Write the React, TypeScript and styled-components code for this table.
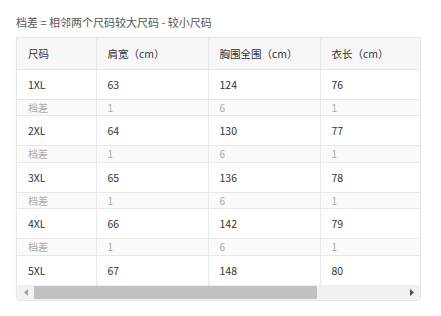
import React from 'react';
import styled, { createGlobalStyle } from 'styled-components';

const GlobalStyle = createGlobalStyle`
  html, body {
    margin: 0;
    padding: 0;
    background: #ffffff;
    font-family: "Noto Sans CJK SC", "Noto Sans", sans-serif;
  }
`;

interface SizeRow {
  size: string;
  shoulder: number;
  chest: number;
  length: number;
}

const rows: SizeRow[] = [
  { size: '1XL', shoulder: 63, chest: 124, length: 76 },
  { size: '2XL', shoulder: 64, chest: 130, length: 77 },
  { size: '3XL', shoulder: 65, chest: 136, length: 78 },
  { size: '4XL', shoulder: 66, chest: 142, length: 79 },
  { size: '5XL', shoulder: 67, chest: 148, length: 80 },
];

const Page = styled.div`
  padding: 14px 20px 0 16px;
  width: 405px;
`;

const Caption = styled.div`
  font-size: 11px;
  line-height: 16px;
  color: #555555;
  margin-bottom: 7px;
  white-space: nowrap;
`;

const Panel = styled.div`
  border: 1px solid #e6e6e6;
  border-radius: 0 0 4px 4px;
  box-shadow: 0 1px 2px rgba(0, 0, 0, 0.06);
  overflow: hidden;
`;

const Scroller = styled.div`
  overflow: hidden;
`;

const Table = styled.table`
  border-collapse: collapse;
  table-layout: fixed;
  width: 516px;
  font-size: 10.5px;
`;

const Cell = styled.td<{ $w?: number }>`
  ${(p) => (p.$w ? `width: ${p.$w}px;` : '')}
  box-sizing: border-box;
  padding: 0 0 0 11px;
  border-right: 1px solid #e8e8e8;
  border-bottom: 1px solid #e8e8e8;
  text-align: left;
  white-space: nowrap;
`;

const HeadCell = styled(Cell).attrs({ as: 'th' })`
  height: 31px;
  background: #f7f7f7;
  color: #333333;
  font-weight: normal;
`;

const Row = styled.tr<{ $diff?: boolean }>`
  height: ${(p) => (p.$diff ? '16.5px' : '30px')};
  background: ${(p) => (p.$diff ? '#fafafa' : '#ffffff')};
  color: ${(p) => (p.$diff ? '#ababab' : '#333333')};
  font-size: ${(p) => (p.$diff ? '10px' : '10.5px')};

  &:last-child td {
    border-bottom: none;
  }
`;

const Scrollbar = styled.div`
  display: flex;
  align-items: center;
  height: 15px;
  background: #f1f1f1;
`;

const ArrowButton = styled.div`
  width: 17px;
  height: 15px;
  display: flex;
  align-items: center;
  justify-content: center;
  flex: none;
`;

const Track = styled.div`
  flex: 1;
  height: 15px;
  display: flex;
  align-items: center;
`;

const Thumb = styled.div`
  height: 13px;
  background: #c1c1c1;
`;

const App: React.FC = () => {
  return (
    <>
      <GlobalStyle />
      <Page>
        <Caption>档差 = 相邻两个尺码较大尺码 - 较小尺码</Caption>
        <Panel>
          <Scroller>
            <Table>
              <thead>
                <tr>
                  <HeadCell $w={79}>尺码</HeadCell>
                  <HeadCell $w={112}>肩宽（cm）</HeadCell>
                  <HeadCell $w={112}>胸围全围（cm）</HeadCell>
                  <HeadCell $w={213}>衣长（cm）</HeadCell>
                </tr>
              </thead>
              <tbody>
                {rows.map((r, i) => (
                  <React.Fragment key={r.size}>
                    <Row>
                      <Cell>{r.size}</Cell>
                      <Cell>{r.shoulder}</Cell>
                      <Cell>{r.chest}</Cell>
                      <Cell>{r.length}</Cell>
                    </Row>
                    {i < rows.length - 1 && (
                      <Row $diff>
                        <Cell>档差</Cell>
                        <Cell>1</Cell>
                        <Cell>6</Cell>
                        <Cell>1</Cell>
                      </Row>
                    )}
                  </React.Fragment>
                ))}
              </tbody>
            </Table>
          </Scroller>
          <Scrollbar>
            <ArrowButton>
              <svg width="4" height="7" viewBox="0 0 4 7">
                <path d="M4 0 L0 3.5 L4 7 Z" fill="#a3a3a3" />
              </svg>
            </ArrowButton>
            <Track>
              <Thumb style={{ width: 283 }} />
            </Track>
            <ArrowButton>
              <svg width="4" height="7" viewBox="0 0 4 7">
                <path d="M0 0 L4 3.5 L0 7 Z" fill="#505050" />
              </svg>
            </ArrowButton>
          </Scrollbar>
        </Panel>
      </Page>
    </>
  );
};

export default App;
